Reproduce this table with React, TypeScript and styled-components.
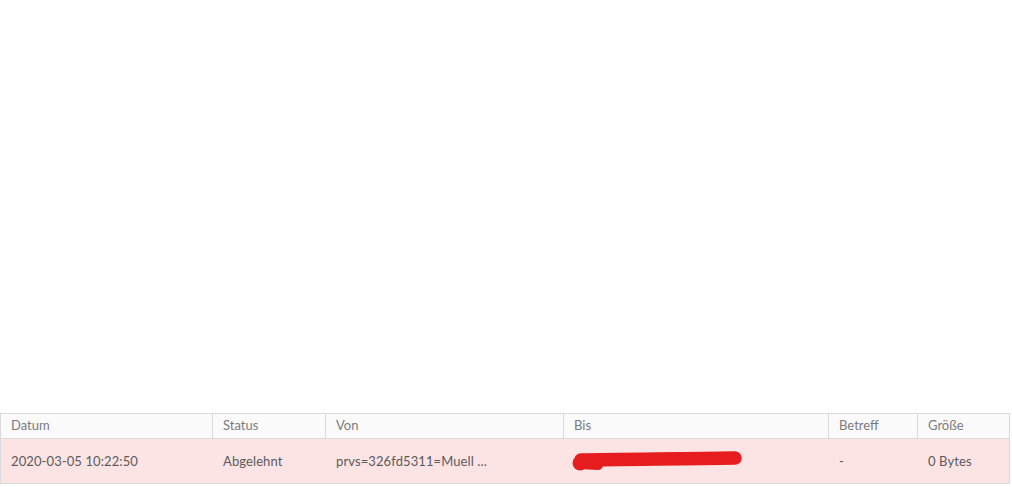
import React from "react";
import styled, { createGlobalStyle } from "styled-components";

const Global = createGlobalStyle`
  html, body { margin: 0; padding: 0; background: #ffffff; }
  body { font-family: "Lato", "Liberation Sans", sans-serif; }
`;

const Page = styled.div`
  height: 487px;
  display: flex;
  flex-direction: column;
  justify-content: flex-end;
  padding-bottom: 3px;
  box-sizing: border-box;
`;

const Table = styled.table`
  width: 1009px;
  border-collapse: collapse;
  table-layout: fixed;
  font-size: 13px;
`;

const HeadCell = styled.th<{ $w: number }>`
  width: ${(p) => p.$w}px;
  height: 25px;
  padding: 0 0 2px 10px;
  text-align: left;
  font-weight: 400;
  color: #7a7a7a;
  background: #fafafa;
  border: 1px solid #d9d9d9;
  box-sizing: border-box;
`;

const Row = styled.tr`
  background: #fde4e4;
`;

const Cell = styled.td`
  height: 44px;
  padding: 0 0 0 10px;
  color: #5a5a5a;
  border: 1px solid #d9d9d9;
  border-left-color: #fde4e4;
  border-right-color: #fde4e4;
  white-space: nowrap;
  overflow: hidden;
  letter-spacing: 0.1px;
  &:first-child { border-left-color: #d9d9d9; }
  &:last-child { border-right-color: #d9d9d9; }
`;

const ScribbleSvg = styled.svg`
  display: block;
  margin-left: -4px;
`;

const Scribble = () => (
  <ScribbleSvg width="180" height="26" viewBox="0 0 180 26">
    <g fill="none" stroke="#e61d1f" strokeLinecap="round" strokeLinejoin="round">
      <path d="M11 12 C 50 11, 110 11, 165 10" strokeWidth="13.5" />
      <path d="M10 16 L 28 17" strokeWidth="10" />
    </g>
    <circle cx="10" cy="15" r="7.5" fill="#e61d1f" />
  </ScribbleSvg>
);

const cols = [
  { label: "Datum", w: 212 },
  { label: "Status", w: 113 },
  { label: "Von", w: 238 },
  { label: "Bis", w: 265 },
  { label: "Betreff", w: 89 },
  { label: "Größe", w: 92 },
];

export default function App() {
  return (
    <>
      <Global />
      <Page>
        <Table>
          <thead>
            <tr>
              {cols.map((c) => (
                <HeadCell key={c.label} $w={c.w}>
                  {c.label}
                </HeadCell>
              ))}
            </tr>
          </thead>
          <tbody>
            <Row>
              <Cell>2020-03-05 10:22:50</Cell>
              <Cell>Abgelehnt</Cell>
              <Cell>prvs=326fd5311=Muell ...</Cell>
              <Cell>
                <Scribble />
              </Cell>
              <Cell>-</Cell>
              <Cell>0 Bytes</Cell>
            </Row>
          </tbody>
        </Table>
      </Page>
    </>
  );
}
